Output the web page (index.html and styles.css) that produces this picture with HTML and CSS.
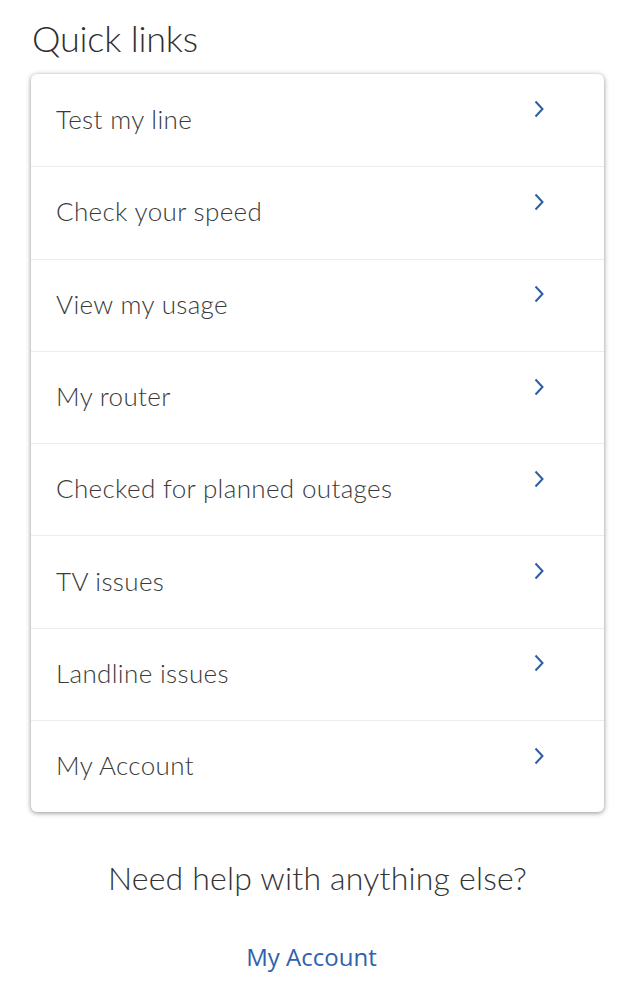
FILE: index.html
```html
<!DOCTYPE html>
<html lang="en">
<head>
<meta charset="utf-8">
<link rel="stylesheet" href="styles.css">
</head>
<body>
<main class="page">
  <h1 class="title">Quick links</h1>
  <ul class="card">
    <li class="row"><span class="label">Test my line</span><svg class="chev" viewBox="0 0 10 18"><path d="M1.5 1.5 L8.5 9 L1.5 16.5"/></svg></li>
    <li class="row"><span class="label">Check your speed</span><svg class="chev" viewBox="0 0 10 18"><path d="M1.5 1.5 L8.5 9 L1.5 16.5"/></svg></li>
    <li class="row"><span class="label">View my usage</span><svg class="chev" viewBox="0 0 10 18"><path d="M1.5 1.5 L8.5 9 L1.5 16.5"/></svg></li>
    <li class="row"><span class="label">My router</span><svg class="chev" viewBox="0 0 10 18"><path d="M1.5 1.5 L8.5 9 L1.5 16.5"/></svg></li>
    <li class="row"><span class="label">Checked for planned outages</span><svg class="chev" viewBox="0 0 10 18"><path d="M1.5 1.5 L8.5 9 L1.5 16.5"/></svg></li>
    <li class="row"><span class="label">TV issues</span><svg class="chev" viewBox="0 0 10 18"><path d="M1.5 1.5 L8.5 9 L1.5 16.5"/></svg></li>
    <li class="row"><span class="label">Landline issues</span><svg class="chev" viewBox="0 0 10 18"><path d="M1.5 1.5 L8.5 9 L1.5 16.5"/></svg></li>
    <li class="row"><span class="label">My Account</span><svg class="chev" viewBox="0 0 10 18"><path d="M1.5 1.5 L8.5 9 L1.5 16.5"/></svg></li>
  </ul>
  <p class="help">Need help with anything else?</p>
  <a class="link" href="#">My Account</a>
</main>
</body>
</html>
```
FILE: styles.css
```css
html, body {
  margin: 0;
  padding: 0;
  background: #ffffff;
}
.page {
  display: flex;
  flex-direction: column;
  padding: 16px 29px 0 31px;
  font-family: Lato, "Open Sans", sans-serif;
  color: #333333;
}
.title {
  margin: 0 0 0 1px;
  font-size: 36px;
  font-weight: 300;
  line-height: 44px;
  letter-spacing: -0.2px;
  color: #2f2f2f;
}
.card {
  list-style: none;
  margin: 14px 0 0 0;
  padding: 0;
  background: #fff;
  border-radius: 6px;
  box-shadow: 0 1px 5px rgba(0,0,0,0.45);
}
.row {
  height: 92.3px;
  display: flex;
  align-items: center;
  justify-content: space-between;
  padding: 0 60px 0 25px;
  border-top: 1px solid #ececec;
  box-sizing: border-box;
}
.row:first-child {
  border-top: none;
}
.label {
  font-size: 26px;
  font-weight: 300;
  color: #3a3a3a;
  letter-spacing: 0.35px;
  margin-top: -3px;
}
.chev {
  width: 10px;
  height: 18px;
  margin-top: -22px;
  fill: none;
  stroke: #2d5ea5;
  stroke-width: 2;
}
.help {
  margin: 46px 0 0 0;
  text-align: center;
  font-size: 32px;
  font-weight: 300;
  color: #333;
  letter-spacing: 0.2px;
  line-height: 40px;
}
.link {
  align-self: center;
  margin: 42px 12px 0 0;
  font-family: "Open Sans", sans-serif;
  font-size: 24px;
  color: #2f62ad;
  text-decoration: none;
}
```
